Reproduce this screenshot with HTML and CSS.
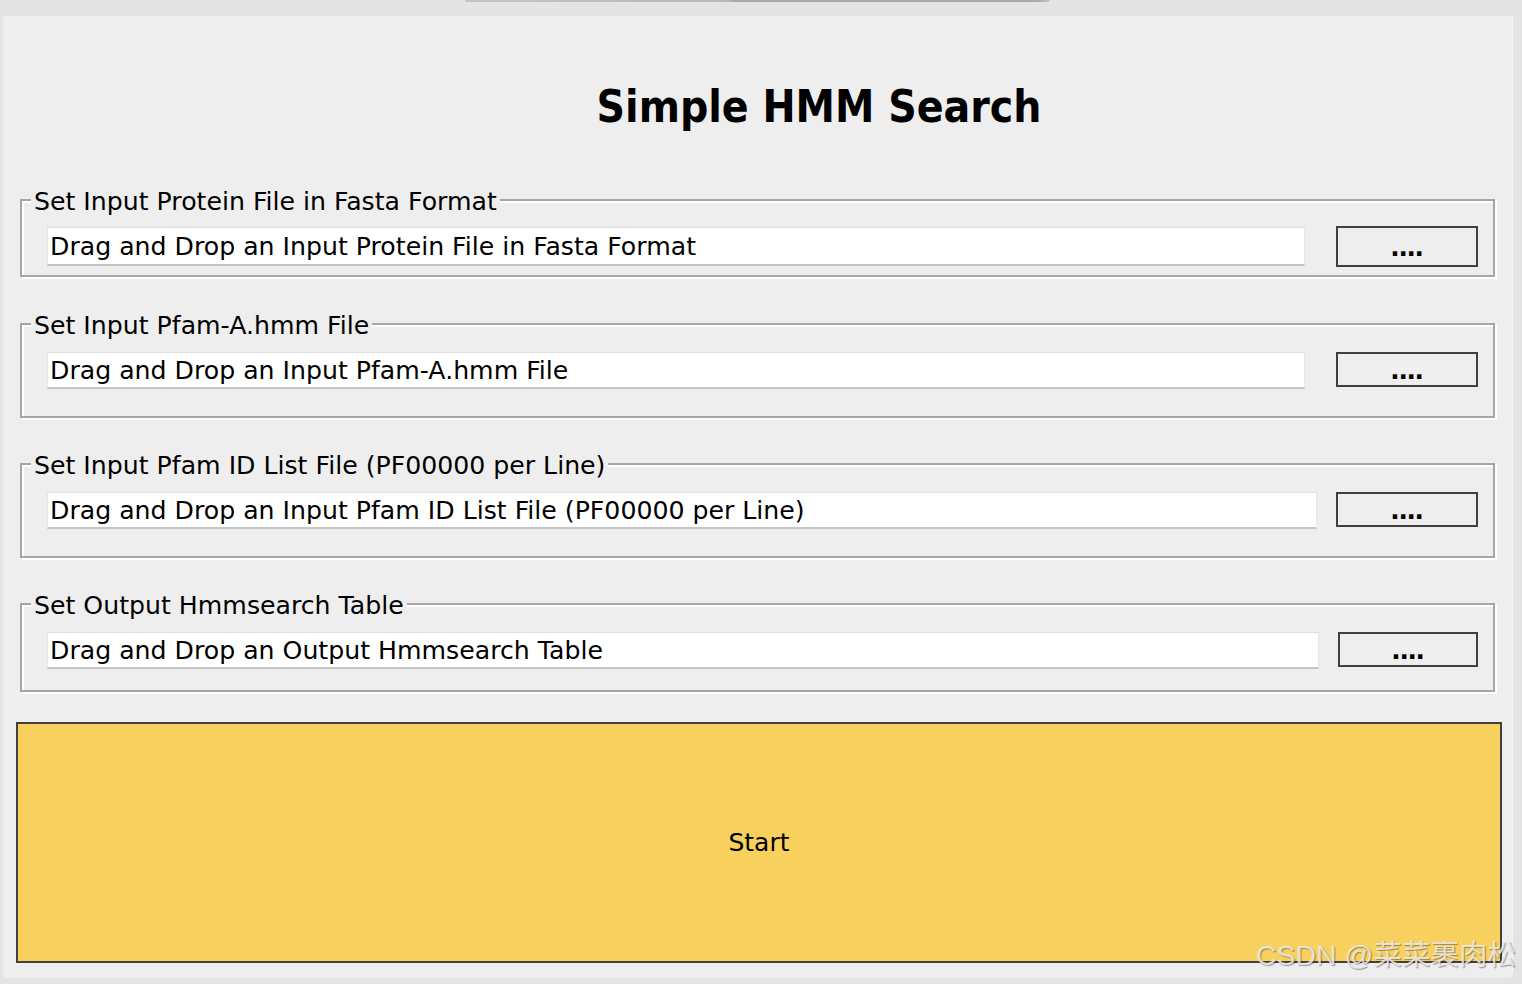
FILE: index.html
```html
<!DOCTYPE html>
<html>
<head>
<meta charset="utf-8">
<title>Simple HMM Search</title>
<link rel="stylesheet" href="styles.css">
</head>
<body>
<div class="topstrip"><div class="tabline"></div></div>
<div class="panel">
  <h1 class="title">Simple HMM Search</h1>

  <div class="group g1">
    <div class="legend">Set Input Protein File in Fasta Format</div>
    <div class="row">
      <div class="field field-tall">Drag and Drop an Input Protein File in Fasta Format</div>
      <div class="browse browse-tall">....</div>
    </div>
  </div>

  <div class="group g2">
    <div class="legend">Set Input Pfam-A.hmm File</div>
    <div class="row">
      <div class="field">Drag and Drop an Input Pfam-A.hmm File</div>
      <div class="browse">....</div>
    </div>
  </div>

  <div class="group g3">
    <div class="legend">Set Input Pfam ID List File (PF00000 per Line)</div>
    <div class="row">
      <div class="field">Drag and Drop an Input Pfam ID List File (PF00000 per Line)</div>
      <div class="browse browse-near">....</div>
    </div>
  </div>

  <div class="group g4">
    <div class="legend">Set Output Hmmsearch Table</div>
    <div class="row">
      <div class="field">Drag and Drop an Output Hmmsearch Table</div>
      <div class="browse browse-near browse-narrow">....</div>
    </div>
  </div>

  <div class="start">Start</div>
</div>
<div class="watermark">CSDN @菜菜裹肉松</div>
</body>
</html>
```

FILE: styles.css
```css
html, body {
  margin: 0;
  padding: 0;
}
body {
  background: #e4e4e4;
  font-family: "DejaVu Sans", "Noto Sans", sans-serif;
  color: #000;
  width: 1522px;
  height: 984px;
  overflow: hidden;
  position: relative;
}
.topstrip {
  height: 16px;
  display: flex;
  align-items: flex-start;
}
.tabline {
  margin-left: 465px;
  width: 585px;
  height: 2px;
  background: linear-gradient(to right, #c4c4c4 0, #b8b8b8 45%, #a9a9a9 46%, #a9a9a9 98%, #c8c8c8 100%);
  border-radius: 0 0 2px 2px;
}
.panel {
  margin-left: 3px;
  width: 1510px;
  height: 962px;
  box-sizing: border-box;
  background: #eeeeee;
  border-right: 1px solid #f6f6f6;
  border-radius: 0 0 6px 0;
  padding-top: 66px;
  display: flex;
  flex-direction: column;
}
.title {
  margin: 0;
  padding-left: 123px;
  text-align: center;
  font-family: "DejaVu Sans Condensed", "DejaVu Sans", sans-serif;
  font-stretch: condensed;
  font-weight: bold;
  font-size: 44px;
  line-height: 50px;
  height: 50px;
}
.group {
  margin-left: 17px;
  width: 1475px;
  box-sizing: border-box;
  border: 2px solid #a6a6a6;
  box-shadow: 2px 2px 0 #ffffff, inset 2px 2px 0 #ffffff;
  padding: 0 15px 27px 25px;
}
.g1 { margin-top: 67px; padding-bottom: 8px; }
.g2 { margin-top: 46px; }
.g3 { margin-top: 45px; }
.g4 { margin-top: 45px; padding-bottom: 21px; }
.legend {
  width: fit-content;
  margin: -14px 0 0 -16px;
  padding: 0 3px;
  background: #eeeeee;
  font-size: 25.2px;
  line-height: 30px;
  height: 30px;
  white-space: nowrap;
}
.row {
  display: flex;
  align-items: flex-start;
  margin-top: 11px;
}
.g1 .row { margin-top: 9px; }
.field {
  flex: 1;
  box-sizing: border-box;
  height: 37px;
  background: #ffffff;
  border-top: 1px solid #dedede;
  border-left: 1px solid #e4e4e4;
  border-right: 1px solid #e6e6e6;
  border-bottom: 2px solid #c6c6c6;
  padding: 2px 0 0 2px;
  font-size: 25.2px;
  line-height: 32px;
  white-space: nowrap;
  overflow: hidden;
}
.field-tall {
  height: 39px;
  margin-top: 1px;
  padding-top: 3px;
  line-height: 32px;
}
.browse {
  width: 142px;
  height: 35px;
  box-sizing: border-box;
  margin-left: 31px;
  border: 2px solid #3f3f3f;
  background: #eeeeee;
  text-align: center;
  font-size: 24.7px;
  line-height: 30px;
  padding-top: 2px;
  font-weight: bold;
  letter-spacing: -1.3px;
  text-indent: -1px;
}
.browse-tall {
  height: 41px;
  padding-top: 5px;
}
.browse-near { margin-left: 19px; }
.browse-narrow { width: 140px; }
.start {
  margin-top: 30px;
  margin-left: 13px;
  width: 1486px;
  height: 241px;
  box-sizing: border-box;
  border: 2px solid #404040;
  background: #f7d05e;
  display: flex;
  align-items: center;
  justify-content: center;
  font-size: 25px;
  line-height: 30px;
}
.watermark {
  position: absolute;
  right: 6px;
  top: 937px;
  font-family: "Liberation Sans", "Noto Sans CJK SC", sans-serif;
  font-size: 28.5px;
  line-height: 36px;
  color: rgba(236, 236, 236, 0.85);
  text-shadow: 1px 1px 1px rgba(0, 0, 0, 0.35);
  white-space: nowrap;
}
```
